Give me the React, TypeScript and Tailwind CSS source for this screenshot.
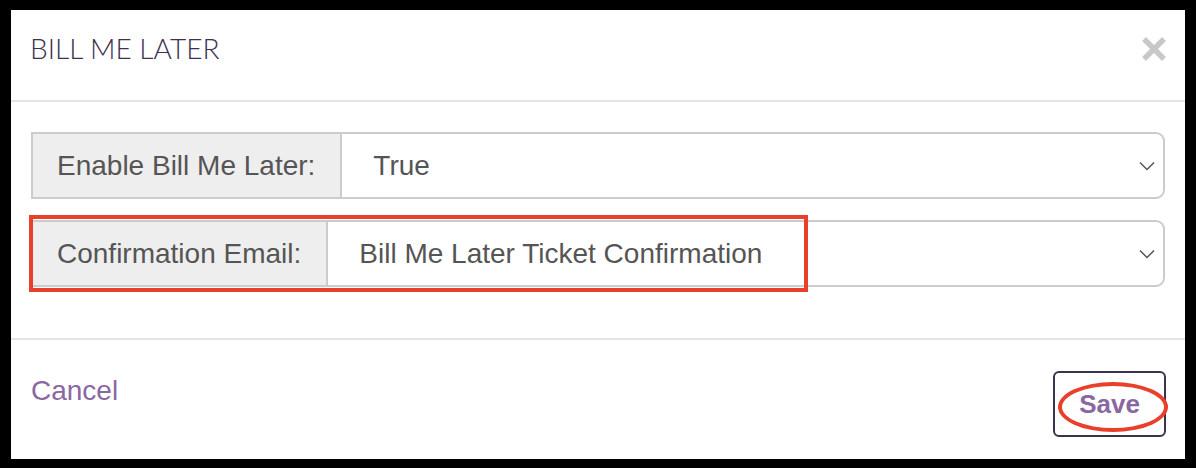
export default function App() {
  return (
    <main className="w-[1196px] h-[468px] bg-black pt-[10px] pl-[11px] pr-[11px] pb-[9px] font-['Liberation_Sans',Arial,sans-serif]">
      <div className="relative h-full bg-white flex flex-col">
        {/* Header */}
        <div className="h-[92px] flex items-start justify-between pt-[24px] pl-[19px] pr-[19px] border-b-2 border-[#e5e5e5]">
          <h1 className="text-[28px] font-light text-[#3d3150] font-['Lato',sans-serif] leading-none">
            BILL ME LATER
          </h1>
          <svg width="24" height="24" viewBox="0 0 24 24" className="mt-[3px]">
            <path d="M2 2 L22 22 M22 2 L2 22" stroke="#c8c8c8" strokeWidth="5.5" strokeLinecap="butt" />
          </svg>
        </div>

        {/* Body */}
        <div className="flex flex-col gap-[21px] pt-[30px] pb-[51px] pl-[20px] pr-[20px] border-b-2 border-[#e5e5e5]">
          <Row label="Enable Bill Me Later:" value="True" />
          <Row label="Confirmation Email:" value="Bill Me Later Ticket Confirmation" />
        </div>

        {/* Footer */}
        <div className="flex-1 flex items-start justify-between pl-[20px] pr-[19px]">
          <button className="mt-[37px] text-[28px] text-[#8a67a3] leading-none">Cancel</button>
          <button className="mt-[31px] w-[113px] h-[66px] rounded-[6px] border-2 border-[#3d3150] text-[26px] font-bold text-[#8a67a3]">
            Save
          </button>
        </div>

        {/* annotations */}
        <div className="absolute left-[18px] top-[205px] w-[779px] h-[77px] border-4 border-[#e8402a]" />
        <div className="absolute left-[1047px] top-[372px] w-[110px] h-[50px] rounded-[50%] border-4 border-[#e8402a]" />
      </div>
    </main>
  )
}

function Row({ label, value }: { label: string; value: string }) {
  return (
    <div className="flex h-[67px] text-[28px] text-[#555555]">
      <div className="flex items-center pl-[24px] pr-[25px] bg-[#eeeeee] border-2 border-[#cccccc]">
        {label}
      </div>
      <div className="flex-1 flex items-center justify-between pl-[31px] pr-[8px] border-2 border-l-0 border-[#cccccc] rounded-r-[9px]">
        <span>{value}</span>
        <svg width="16" height="10" viewBox="0 0 16 10">
          <path d="M1 1.5 L8 8.5 L15 1.5" fill="none" stroke="#555555" strokeWidth="1.5" />
        </svg>
      </div>
    </div>
  )
}
